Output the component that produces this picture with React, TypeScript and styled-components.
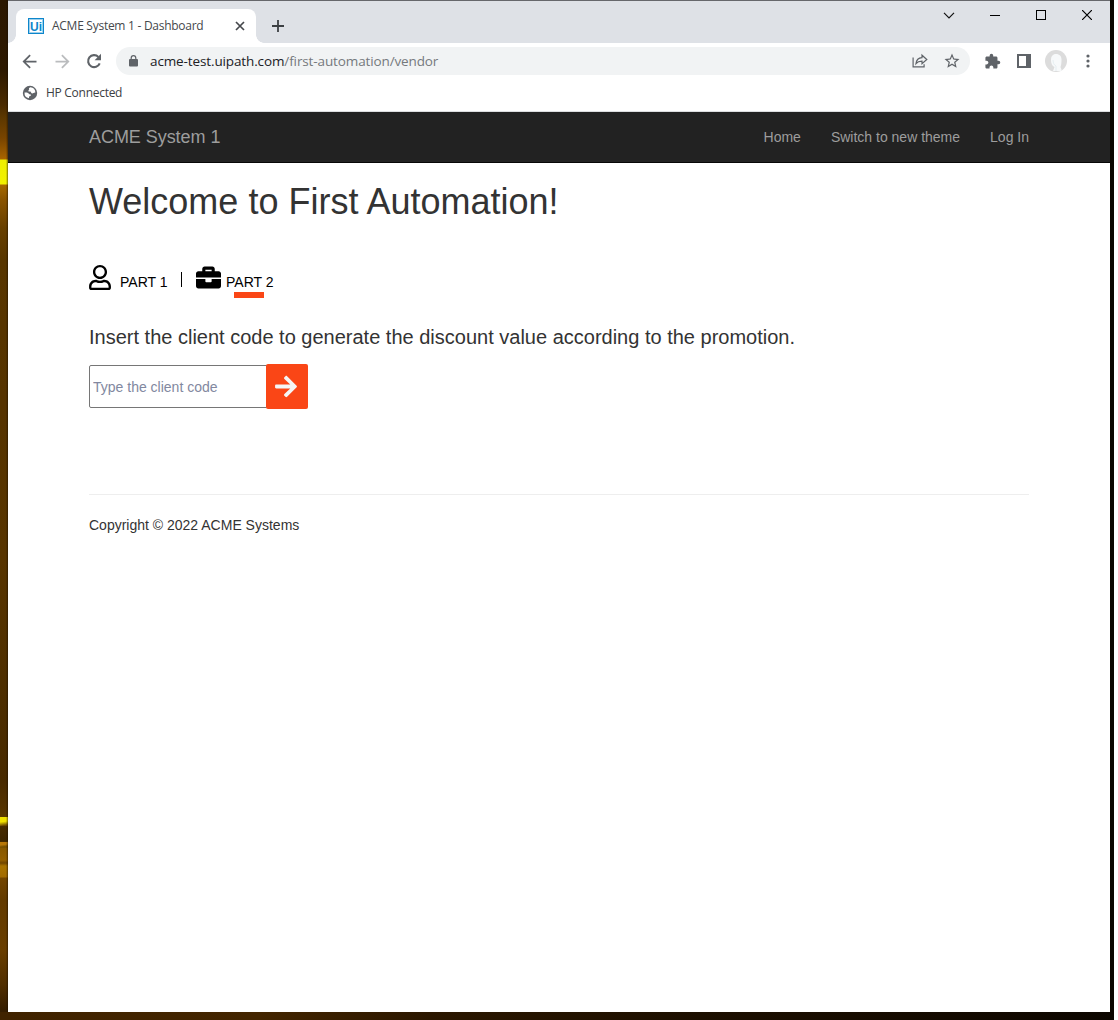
import React from 'react';
import styled, { createGlobalStyle } from 'styled-components';
import { FaArrowRight, FaBriefcase, FaRegUser } from 'react-icons/fa';
import { MdArrowBack, MdArrowForward, MdExtension, MdStarBorder } from 'react-icons/md';

const GlobalStyle = createGlobalStyle`
  * { box-sizing: border-box; }
  body { margin: 0; background: #fff; overflow: hidden; }
  button { font: inherit; border: 0; background: none; padding: 0; }
`;

const uiFont = `'Open Sans', 'Noto Sans', sans-serif`;
const pageFont = `'Liberation Sans', Arial, sans-serif`;

const Desktop = styled.div`
  width: 1114px;
  height: 1020px;
  padding: 0 4px 8px 8px;
  background:
    linear-gradient(90deg, transparent 6px, rgba(20, 10, 0, 0.55) 8px) 0 0 / 8px 1012px no-repeat,
    linear-gradient(172deg, #f0e000 5px, #6b4700 9px) 0 817px / 8px 9px no-repeat,
    linear-gradient(172deg, #b87808 3px, #7a5200 5px) 0 842px / 8px 6px no-repeat,
    linear-gradient(
      180deg,
      #2b1700 0, #2d1900 70px, #4a2b00 105px, #5d3800 118px, #784400 138px, #a86400 159px,
      #eeee00 160px, #f2f200 184px, #a66a00 185px, #8a5400 200px, #684000 228px, #583600 260px,
      #563400 400px, #583500 560px, #4d2e00 700px, #482a00 780px, #553300 810px, #5b3900 818px,
      #452a00 828px, #3c2500 841px, #865800 846px, #946000 860px, #714600 863px, #a97400 866px,
      #a26b00 877px, #734600 878px, #633b00 900px, #693e00 950px, #502e00 985px, #351d00 1010px
    ) 0 0 / 8px 1012px no-repeat,
    linear-gradient(90deg, #402300, #432500 260px, #2b1700 430px, #1c0f00 700px, #120900 1000px, #0c0600);
`;

const Browser = styled.div`
  height: 1012px;
  display: flex;
  flex-direction: column;
  border-top: 1px solid #66676b;
  background: #fff;
`;

const TabStrip = styled.div`
  flex: 0 0 42px;
  display: flex;
  padding: 8px 0 0 8px;
  background: #dee1e6;
`;

const Tab = styled.div`
  position: relative;
  display: flex;
  align-items: center;
  width: 240px;
  height: 34px;
  padding: 0 11px 0 12px;
  border-radius: 8px 8px 0 0;
  background: #fff;
  font: 12px ${uiFont};
  color: #45484c;
  &::before, &::after {
    content: '';
    position: absolute;
    bottom: 0;
    width: 8px;
    height: 8px;
  }
  &::before { left: -8px; background: radial-gradient(circle at 0 0, transparent 7.5px, #fff 8px); }
  &::after { right: -8px; background: radial-gradient(circle at 100% 0, transparent 7.5px, #fff 8px); }
`;

const Favicon = styled.span`
  display: flex;
  align-items: center;
  justify-content: center;
  width: 16px;
  height: 16px;
  margin-right: 8px;
  padding-top: 1px;
  border: 1px solid #0d86cb;
  box-shadow: inset 0 0 0 1px #9fd0ec;
  color: #0d86cb;
  font: bold 12px/14px ${pageFont};
`;

const TabTitle = styled.span`
  flex: 1;
  padding-bottom: 1px;
  white-space: nowrap;
  letter-spacing: -0.27px;
`;

const NewTab = styled.button`
  display: flex;
  align-items: center;
  justify-content: center;
  width: 28px;
  height: 34px;
  margin-left: 8px;
`;

const WindowControls = styled.div`
  display: flex;
  margin: -8px 0 0 auto;
`;

const WindowButton = styled.button`
  display: flex;
  align-items: center;
  justify-content: center;
  width: 46px;
  height: 28px;
`;

const Toolbar = styled.div`
  flex: 0 0 36px;
  display: flex;
  align-items: center;
  padding: 0 6px;
`;

const ToolButton = styled.button<{ $faint?: boolean }>`
  flex: 0 0 32px;
  display: flex;
  align-items: center;
  justify-content: center;
  height: 32px;
  color: ${p => (p.$faint ? '#babcbe' : '#5f6368')};
`;

const BackButton = styled(ToolButton)`
  padding-right: 1px;
`;

const AddressBar = styled.div`
  flex: 0 0 854px;
  display: flex;
  align-items: center;
  height: 28px;
  margin: 0 6px;
  padding: 0 2px 0 13px;
  border-radius: 14px;
  background: #f1f3f4;
  color: #5f6368;
`;

const Url = styled.span`
  flex: 1;
  margin-left: 12px;
  font: 13.5px ${uiFont};
  letter-spacing: -0.12px;
  color: #75797d;
  b { font-weight: 400; color: #202124; }
`;

const Avatar = styled.span`
  display: block;
  width: 22px;
  height: 22px;
  border-radius: 50%;
  overflow: hidden;
`;

const Bookmarks = styled.div`
  flex: 0 0 33px;
  display: flex;
  align-items: center;
  gap: 8px;
  padding: 0 14px 5px;
  border-bottom: 1px solid #dcdee0;
  color: #5f6368;
`;

const BookmarkLabel = styled.span`
  font: 12px ${uiFont};
  letter-spacing: -0.28px;
  color: #3c4043;
`;

const Navbar = styled.nav`
  flex: 0 0 51px;
  display: flex;
  align-items: center;
  gap: 30px;
  padding: 0 81px;
  background: #222;
  border-bottom: 1px solid #080808;
  font: 14px ${pageFont};
  color: #9d9d9d;
`;

const Brand = styled.span`
  margin-right: auto;
  font-size: 18px;
  letter-spacing: -0.05px;
`;

const Content = styled.main`
  padding: 0 81px;
  font: 14px/20px ${pageFont};
  color: #333;
`;

const Title = styled.h1`
  margin: 19px 0 44px;
  font-size: 36px;
  font-weight: 400;
  line-height: 39px;
`;

const Parts = styled.div`
  display: flex;
  align-items: flex-start;
  height: 33px;
  color: #000;
`;

const UserIcon = styled(FaRegUser)`
  width: 22px;
  height: 25px;
`;

const ArrowIcon = styled(FaArrowRight)`
  width: 22px;
  height: 25px;
`;

const PartLabel = styled.span<{ $gap: number; $active?: boolean }>`
  position: relative;
  margin: 7px 0 0 ${p => p.$gap}px;
  &::after {
    content: '';
    position: absolute;
    display: ${p => (p.$active ? 'block' : 'none')};
    left: 8px;
    top: 20px;
    width: 30px;
    height: 6px;
    background: #fa4616;
  }
`;

const Divider = styled.span`
  width: 1px;
  height: 15px;
  margin: 7px 14px 0 13.6px;
  background: #000;
`;

const Prompt = styled.p`
  margin: 25px 0 13px;
  font-size: 20px;
  line-height: 28px;
`;

const Form = styled.div`
  display: flex;
  align-items: center;
  height: 45px;
`;

const CodeInput = styled.input`
  width: 178px;
  height: 43px;
  padding: 1px 3px;
  border: 1px solid #767676;
  border-radius: 2px 0 0 2px;
  font: 14px ${pageFont};
  &::placeholder { color: #8288a0; opacity: 1; }
`;

const Submit = styled.button`
  display: flex;
  align-items: center;
  justify-content: center;
  width: 42px;
  height: 45px;
  margin-left: -1px;
  padding: 0 2px 1px 0;
  border-radius: 2px;
  background: #fa4616;
  color: #f5f5f5;
`;

const Footer = styled.footer`
  margin-top: 85px;
  padding-top: 20px;
  border-top: 1px solid #eee;
`;

const ReloadIcon = () => (
  <svg width="16" height="16" viewBox="0 0 16 16">
    <path fill="none" stroke="currentColor" strokeWidth="2.1" d="M13.700 10.300A6 6 0 1 1 12.400 3.900" />
    <path fill="currentColor" d="M15 .8v6.400H8.600z" />
  </svg>
);

const LockIcon = () => (
  <svg width="9" height="12" viewBox="0 0 9 12">
    <rect y="4" width="9" height="7.500" rx="1" fill="currentColor" />
    <path fill="none" stroke="currentColor" strokeWidth="1.200" d="M2.200 5V2.900a2.300 2.300 0 0 1 4.600 0V5" />
  </svg>
);

const GlobeIcon = () => (
  <svg width="16" height="16" viewBox="0 0 16 16">
    <circle cx="8" cy="8" r="7.200" fill="currentColor" />
    <path fill="#fff" d="M8.300 2.200c-1.100.5-1.600 1.200-1.200 1.900.5.800-.8.900-.7 1.800.1.700 1.100.6 1.800.7.900.2.800 1.600 1.800 1.800 1.300.2 1.500-.9 3.400-.8A5.600 5.600 0 0 0 8.300 2.200zM2.500 7.500c1.300-.2 2.500-.1 3.500.4 1 .5.900 1.200 1.900 1.300 1.300.2 1.400 1 .7 1.600-.6.6-1.500.4-1.600 1.200v1.300A5.600 5.600 0 0 1 2.500 7.500z" />
  </svg>
);

const MenuIcon = () => (
  <svg width="4" height="14" viewBox="0 0 4 14" fill="currentColor">
    <circle cx="2" cy="2" r="1.600" />
    <circle cx="2" cy="7" r="1.600" />
    <circle cx="2" cy="12" r="1.600" />
  </svg>
);

export default function App() {
  return (
    <Desktop>
      <GlobalStyle />
      <Browser>
        <TabStrip>
          <Tab>
            <Favicon>Ui</Favicon>
            <TabTitle>ACME System 1 - Dashboard</TabTitle>
            <svg width="10" height="10" stroke="#45484c" strokeWidth="1.7"><path d="M1 1l8 8M9 1l-8 8" /></svg>
          </Tab>
          <NewTab>
            <svg width="12" height="12" stroke="#3c4043" strokeWidth="1.8"><path d="M0 6h12M6 0v12" /></svg>
          </NewTab>
          <WindowControls>
            <WindowButton><svg width="12" height="7" fill="none" stroke="#111" strokeWidth="1.2"><path d="M1 .8l5 5 5-5" /></svg></WindowButton>
            <WindowButton><svg width="10" height="11" stroke="#000" shapeRendering="crispEdges"><path d="M0 5.5h10" /></svg></WindowButton>
            <WindowButton><svg width="10" height="10" fill="none" stroke="#000" shapeRendering="crispEdges"><path d="M.5.5h9v9h-9z" /></svg></WindowButton>
            <WindowButton><svg width="10" height="10" stroke="#000" strokeWidth="1.200"><path d="M0 0l10 10M10 0L0 10" /></svg></WindowButton>
          </WindowControls>
        </TabStrip>
        <Toolbar>
          <BackButton><MdArrowBack size={21} /></BackButton>
          <ToolButton $faint><MdArrowForward size={21} /></ToolButton>
          <ToolButton><ReloadIcon /></ToolButton>
          <AddressBar>
            <LockIcon />
            <Url><b>acme-test.uipath.com</b>/first-automation/vendor</Url>
            <ToolButton>
              <svg width="16" height="16" viewBox="0 0 16 16" fill="none" stroke="currentColor" strokeWidth="1.2">
                <path d="M1.1 4.500v9.400h11v-2.700M4 10.500c.4-3.600 2.500-5.600 6-5.900V2.200l4.800 4.300L10 10.700V8.200c-2.700 0-4.600.6-6 2.300z" />
              </svg>
            </ToolButton>
            <ToolButton><MdStarBorder size={18} /></ToolButton>
          </AddressBar>
          <ToolButton><MdExtension size={17} /></ToolButton>
          <ToolButton>
            <svg width="14" height="14" fill="currentColor"><path fillRule="evenodd" d="M0 0h14v14H0zM2 2v10h7V2z" /></svg>
          </ToolButton>
          <ToolButton>
            <Avatar>
              <svg width="22" height="22">
                <path fill="#dcdcdc" d="M0 0h22v22H0z" />
                <path fill="#f7f9fa" d="M11 4c3.500 0 5.500 2.300 5.500 5.500 0 3-.2 5.600-1 7.500l1.500 4H8l1.500-4C7 16 6 13 6 10c0-3.600 1.700-6 5-6z" />
                <path fill="none" stroke="#e5edf0" d="M11 16c-2-1-3-3-3-6M11 16v5" />
              </svg>
            </Avatar>
          </ToolButton>
          <ToolButton><MenuIcon /></ToolButton>
        </Toolbar>
        <Bookmarks>
          <GlobeIcon />
          <BookmarkLabel>HP Connected</BookmarkLabel>
        </Bookmarks>
        <Navbar>
          <Brand>ACME System 1</Brand>
          <span>Home</span>
          <span>Switch to new theme</span>
          <span>Log In</span>
        </Navbar>
        <Content>
          <Title>Welcome to First Automation!</Title>
          <Parts>
            <UserIcon />
            <PartLabel $gap={9}>PART 1</PartLabel>
            <Divider />
            <FaBriefcase size={25} />
            <PartLabel $gap={5} $active>PART 2</PartLabel>
          </Parts>
          <Prompt>Insert the client code to generate the discount value according to the promotion.</Prompt>
          <Form>
            <CodeInput placeholder="Type the client code" />
            <Submit><ArrowIcon /></Submit>
          </Form>
          <Footer>Copyright © 2022 ACME Systems</Footer>
        </Content>
      </Browser>
    </Desktop>
  );
}
